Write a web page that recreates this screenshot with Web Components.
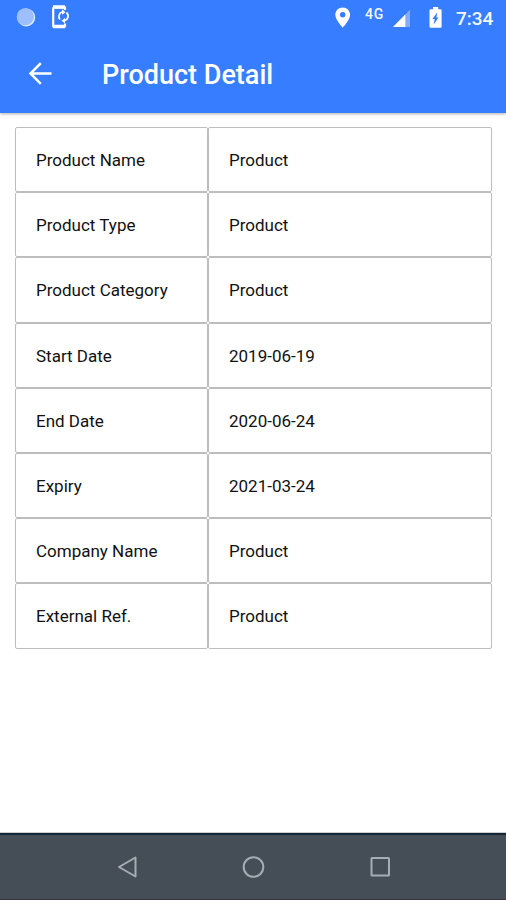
<!DOCTYPE html>
<html lang="en">
<head>
<meta charset="utf-8">
<title>Product Detail</title>
<style>
html, body { margin: 0; height: 100%; overflow: hidden; background: #fff; }
body { font-family: Roboto, "Liberation Sans", sans-serif; }
</style>
</head>
<body>
<product-screen></product-screen>
<script>
const define = (name, html) => customElements.define(name, class extends HTMLElement {
  constructor() {
    super();
    const t = document.createElement('template');
    t.innerHTML = html;
    this.attachShadow({ mode: 'open' }).append(t.content.cloneNode(true));
  }
});

define('status-bar', `
<style>
:host { display: flex; box-sizing: border-box; height: 36px; padding: 0 11px 0 15px; color: #f4f9ff; }
svg { display: block; flex: none; }
.net { font-size: 14px; font-weight: 500; line-height: 16px; margin: 6px 0 0 12px; width: 22px; letter-spacing: .9px; }
.time { font-size: 19px; font-weight: 500; line-height: 24px; margin: 7px 0 0 10px; width: 39px; white-space: nowrap; }
.gap { flex: 1; }
</style>
<svg width="60" height="36" viewBox="15 0 60 36">
  <circle cx="26.2" cy="17.4" r="9" fill="#e0ebff"/>
  <circle cx="25.3" cy="16.7" r="8.6" fill="#9dbeff"/>
  <path d="M65 10V7.5H54.2Q53.2 7.500 53.200 8.500V26Q53.200 27 54.200 27H64Q65 27 65 26V23.500" fill="none" stroke="#fff" stroke-width="2.2"/>
  <path d="M53 7h12M53 26.500h12" stroke="#fff" stroke-width="3.400"/>
  <path d="M60 19.500A4.800 4.800 0 0 1 62.500 11.800M66.500 12.500A4.800 4.800 0 0 1 64.500 20.700" fill="none" stroke="#fff" stroke-width="1.700"/>
  <path d="M62 9.200l3.500 3-3.500 2.600zM65 18l-3.500 2.700 3.500 2.500z" fill="#fff"/>
</svg>
<span class="gap"></span>
<svg width="20" height="36" viewBox="333 0 20 36"><path fill="#fff" fill-rule="evenodd" d="M342.700 7.500c-4.200 0-7.400 3.200-7.400 7.300 0 5 7.400 12.900 7.400 12.900s7.400-7.900 7.400-12.900c0-4.100-3.200-7.300-7.400-7.300zm0 4.600a2.700 2.700 0 1 1 0 5.400 2.700 2.700 0 0 1 0-5.400z"/></svg>
<span class="net">4G</span>
<svg width="59" height="36" viewBox="387 0 59 36">
  <path d="M410 9.800V27H393z" fill="#82adff"/><path d="M405.300 14.500V27H393z" fill="#fff"/>
  <path fill="#fff" fill-rule="evenodd" d="M433 7h5.200v2.200h2.300q1.100 0 1.100 1.100v16.200q0 1.200-1.100 1.200h-9.900q-1.100 0-1.100-1.200V10.300q0-1.100 1.100-1.100h2.400zM437.300 12.200l-4.900 6.700h2.300l-1 5.600 4.900-6.900h-2.200z"/>
</svg>
<span class="time">7:34</span>`);

define('app-bar', `
<style>
:host { display: flex; align-items: center; box-sizing: border-box; height: 77px; padding: 0 28px; color: #fff; }
svg { display: block; flex: none; }
h1 { margin: 0 0 0 50px; font-size: 27px; line-height: 36px; font-weight: 500; letter-spacing: 0; white-space: nowrap; }
</style>
<svg width="24" height="77" viewBox="0 0 24 77" fill="none" stroke="#fff" stroke-width="2.500"><path d="M23.500 37.500H2.500M12.800 27.200L2.500 37.500l10.300 10.300"/></svg>
<h1><slot></slot></h1>`);

define('detail-row', `
<style>
:host { display: grid; grid-template-columns: 193px 1fr; height: 65.200px; }
div { box-sizing: border-box; display: flex; align-items: center; padding: 1px 20px 0; border: 1px solid #bdbdbd; border-radius: 2px; font-size: 17px; line-height: 24px; color: #111; white-space: nowrap; }
</style>
<div><slot name="label"></slot></div><div><slot></slot></div>`);

define('nav-bar', `
<style>
:host { display: flex; justify-content: center; box-sizing: border-box; height: 67px; padding-top: 0; background: #454d56; border-top: 2px solid #132738; border-bottom: 1px solid #3b3540; }
svg { display: block; }
</style>
<svg width="506" height="64" viewBox="0 835 506 64" fill="none" stroke="#a5adb3" stroke-width="2" stroke-linejoin="round"><path d="M135.500 857.500v19L119 867z"/><circle cx="253.500" cy="867" r="9.800"/><rect x="371.500" y="858" width="17.500" height="17.500" rx=".5"/></svg>`);

define('product-screen', `
<style>
:host { display: flex; flex-direction: column; height: 900px; width: 506px; background: #fff; }
header { background: #377dff; height: 113px; flex: none; box-shadow: 0 1px 3px rgba(0,0,0,.32); }
main { flex: 1; padding: 14px 14px 0 15px; }
nav-bar { flex: none; box-shadow: 0 -1px 0 #ccc; }
</style>
<header><status-bar></status-bar><app-bar>Product Detail</app-bar></header>
<main>
${[['Product Name','Product'],['Product Type','Product'],['Product Category','Product'],['Start Date','2019-06-19'],['End Date','2020-06-24'],['Expiry','2021-03-24'],['Company Name','Product'],['External Ref.','Product']]
  .map(([a, b]) => `<detail-row><span slot="label">${a}</span>${b}</detail-row>`).join('')}
</main>
<nav-bar></nav-bar>`);
</script>
</body>
</html>
